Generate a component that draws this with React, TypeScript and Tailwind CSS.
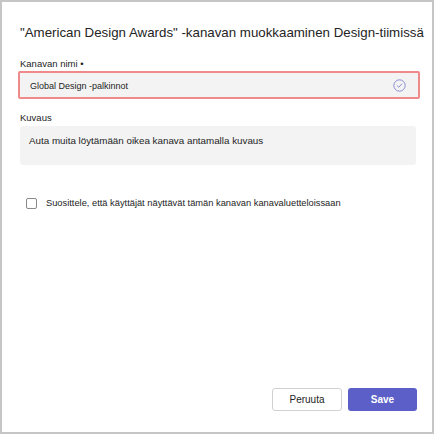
export default function App() {
  return (
    <div className="w-[435px] h-[435px] bg-white font-['Liberation_Sans',Arial,sans-serif]">
      <div className="w-[434px] h-[434px] border-2 border-[#c6c6c6] flex flex-col px-[16px]">
        <h1 className="mt-[21px] ml-[2px] text-[13.3px] leading-[20px] text-[#242424] whitespace-nowrap">
          "American Design Awards" -kanavan muokkaaminen Design-tiimissä
        </h1>

        <label className="mt-[15px] ml-[2px] text-[9.5px] leading-[12px] text-[#242424]">Kanavan nimi •</label>
        <div className="mt-[1px] mr-[-4px] h-[28px] border-2 border-[#f08a8a] bg-[#f3f3f3] rounded-[2px] flex items-center pl-[10px] pr-[12px]">
          <span className="flex-1 pt-[2px] text-[9px] leading-[12px] text-[#242424]">Global Design -palkinnot</span>
          <svg width="13" height="13" viewBox="0 0 16 16" fill="none">
            <circle cx="8" cy="8" r="7" stroke="#8b8cd0" strokeWidth="1.2" />
            <path d="M5.2 8.3 L7.1 10.1 L10.8 6.2" stroke="#8b8cd0" strokeWidth="1.2" strokeLinecap="round" strokeLinejoin="round" />
          </svg>
        </div>

        <label className="mt-[13px] ml-[2px] text-[9.5px] leading-[12px] text-[#242424]">Kuvaus</label>
        <div className="mt-[2px] ml-[2px] h-[39px] bg-[#f3f3f3] rounded-[3px] pl-[9px] pt-[8px] text-[9.8px] leading-[14px] text-[#242424]">
          Auta muita löytämään oikea kanava antamalla kuvaus
        </div>

        <div className="mt-[32px] flex items-center pl-[8px] gap-[9px]">
          <div className="w-[11px] h-[11px] border border-[#8a8a8a] rounded-[2px] bg-white" />
          <span className="text-[9.3px] leading-[12px] text-[#242424]">Suosittele, että käyttäjät näyttävät tämän kanavan kanavaluetteloissaan</span>
        </div>

        <div className="mt-auto mb-[21px] mr-[-1px] flex justify-end gap-[6px]">
          <button className="w-[70px] h-[23px] border border-[#d1d1d1] rounded-[3px] bg-white text-[10px] text-[#242424]">Peruuta</button>
          <button className="w-[69px] h-[23px] rounded-[3px] bg-[#5b5fc7] text-[10px] font-bold text-white">Save</button>
        </div>
      </div>
    </div>
  );
}
